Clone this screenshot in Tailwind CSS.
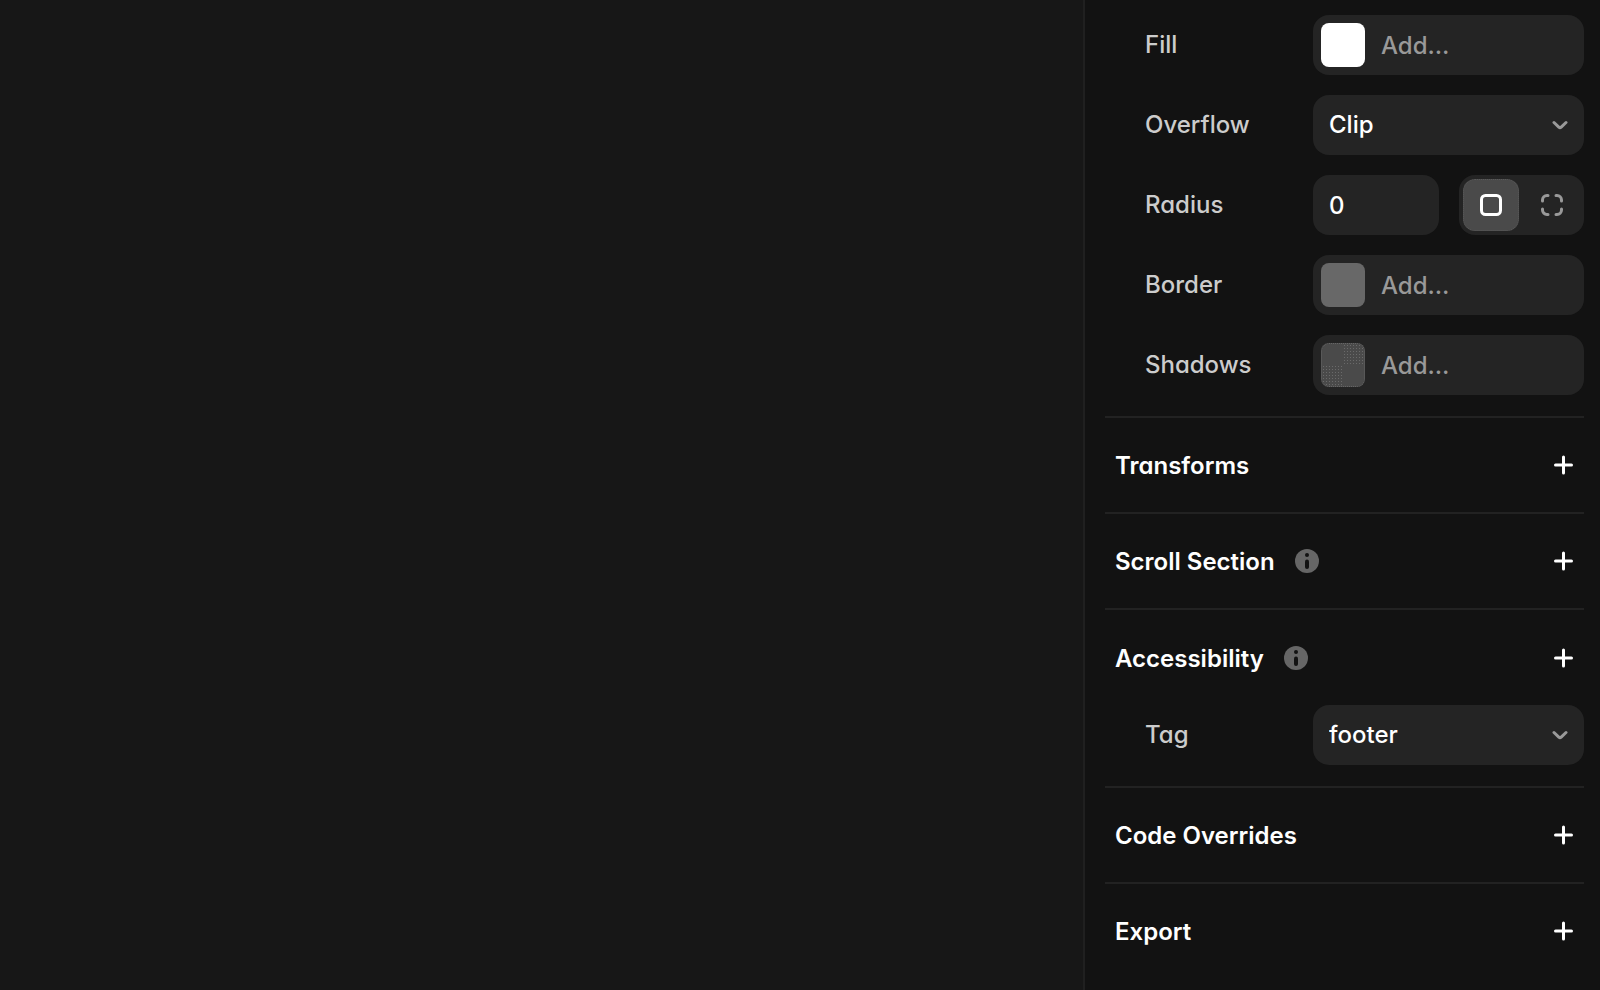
<!DOCTYPE html>
<html lang="en">
<head>
    <meta charset="UTF-8">
    <meta name="viewport" content="width=device-width, initial-scale=1.0">
    <title>Properties</title>
    <script src="https://cdn.jsdelivr.net/npm/@tailwindcss/browser@4"></script>
    <style>
        body {
            font-family: Inter, sans-serif;
            font-feature-settings: "cv11";
        }
    </style>
</head>
<body class="flex min-h-screen bg-[#171717] text-2xl font-medium text-white">
    <!-- Canvas -->
    <main class="flex-1"></main>

    <!-- Properties panel -->
    <aside class="w-[517px] shrink-0 border-l-2 border-[#202020] bg-[#121212] pl-5 pr-4">
        <!-- Styles -->
        <section class="flex flex-col gap-5 pt-[15px] pb-[21px]">
            <div class="flex items-center">
                <label for="fill" class="flex-1 pl-10 text-[#cccccc]">Fill</label>
                <div class="flex h-15 w-[271px] items-center gap-4 rounded-2xl bg-[#242424] px-2">
                    <span class="size-11 shrink-0 rounded-lg bg-white"></span>
                    <input id="fill" type="text" placeholder="Add…" class="w-full min-w-0 pt-0.5 outline-none placeholder:text-[#999999]">
                </div>
            </div>
            <div class="flex items-center">
                <label for="overflow" class="flex-1 pl-10 text-[#cccccc]">Overflow</label>
                <div class="relative w-[271px]">
                    <select id="overflow" class="h-15 w-full appearance-none rounded-2xl bg-[#242424] px-4">
                        <option>Clip</option>
                        <option>Visible</option>
                    </select>
                    <svg class="pointer-events-none absolute top-6 right-4" width="16" height="12" viewBox="0 0 16 12" fill="none" stroke="#999999" stroke-width="3" stroke-linecap="round" stroke-linejoin="round"><path d="M2 3.5l4.8 4.6q1.2 1 2.4 0L14 3.5"/></svg>
                </div>
            </div>
            <div class="flex items-center">
                <label for="radius" class="flex-1 pl-10 text-[#cccccc]">Radius</label>
                <div class="grid w-[271px] grid-cols-2 gap-5">
                    <input id="radius" type="text" value="0" class="h-15 w-full rounded-2xl bg-[#242424] px-4 outline-none">
                    <div class="grid h-15 grid-cols-2 gap-1 rounded-2xl bg-[#242424] p-1">
                        <button aria-label="All corners" class="flex items-center justify-center rounded-xl border border-dotted border-[#5a5a5a] bg-[#4a4a4a]">
                            <svg width="24" height="24" viewBox="0 0 24 24" fill="none" stroke="#ffffff" stroke-width="3"><rect x="2.5" y="2.5" width="19" height="19" rx="4"/></svg>
                        </button>
                        <button aria-label="Each corner" class="flex items-center justify-center rounded-xl">
                            <svg width="24" height="24" viewBox="0 0 24 24" fill="none" stroke="#999999" stroke-width="3" stroke-linecap="round"><path d="M2.5 8V7A4.5 4.5 0 0 1 7 2.500h1M16 2.500h1A4.500 4.500 0 0 1 21.500 7v1M21.500 16v1a4.500 4.500 0 0 1-4.500 4.500h-1M8 21.500H7A4.500 4.500 0 0 1 2.500 17v-1"/></svg>
                        </button>
                    </div>
                </div>
            </div>
            <div class="flex items-center">
                <label for="border" class="flex-1 pl-10 text-[#cccccc]">Border</label>
                <div class="flex h-15 w-[271px] items-center gap-4 rounded-2xl bg-[#242424] px-2">
                    <span class="size-11 shrink-0 rounded-lg bg-[#686868]"></span>
                    <input id="border" type="text" placeholder="Add…" class="w-full min-w-0 pt-0.5 outline-none placeholder:text-[#999999]">
                </div>
            </div>
            <div class="flex items-center">
                <label for="shadows" class="flex-1 pl-10 text-[#cccccc]">Shadows</label>
                <div class="flex h-15 w-[271px] items-center gap-4 rounded-2xl bg-[#242424] px-2">
                    <span class="grid size-11 shrink-0 grid-cols-2 overflow-hidden rounded-lg border border-dotted border-[#666666] bg-[#4a4a4a]">
                        <span></span>
                        <span class="bg-[radial-gradient(#6a6a6a_1px,transparent_1px)] bg-[size:3px_3px]"></span>
                        <span class="bg-[radial-gradient(#6a6a6a_1px,transparent_1px)] bg-[size:3px_3px]"></span>
                        <span></span>
                    </span>
                    <input id="shadows" type="text" placeholder="Add…" class="w-full min-w-0 pt-0.5 outline-none placeholder:text-[#999999]">
                </div>
            </div>
        </section>

        <!-- Transforms -->
        <section class="border-t-2 border-[#222222]">
            <div class="flex h-[94px] items-center justify-between px-[10px]">
                <h2 class="pt-0.5 font-semibold">Transforms</h2>
                <button aria-label="Add transform">
                    <svg width="20" height="20" viewBox="0 0 20 20" fill="none" stroke="#ffffff" stroke-width="3" stroke-linecap="round"><path d="M9.500 2v16M1.500 10h16"/></svg>
                </button>
            </div>
        </section>

        <!-- Scroll section -->
        <section class="border-t-2 border-[#222222]">
            <div class="flex h-[94px] items-center gap-5 px-[10px]">
                <h2 class="pt-0.5 font-semibold">Scroll Section</h2>
                <svg width="24" height="24" viewBox="0 0 24 24"><circle cx="12" cy="12" r="12" fill="#666666"/><circle cx="12" cy="6" r="2" fill="#121212"/><path d="M12 12.500v5.500" stroke="#121212" stroke-width="4" stroke-linecap="round"/></svg>
                <button aria-label="Add scroll section" class="ml-auto">
                    <svg width="20" height="20" viewBox="0 0 20 20" fill="none" stroke="#ffffff" stroke-width="3" stroke-linecap="round"><path d="M9.500 2v16M1.500 10h16"/></svg>
                </button>
            </div>
        </section>

        <!-- Accessibility -->
        <section class="border-t-2 border-[#222222] pb-[21px]">
            <div class="flex h-[95px] items-center gap-5 px-[10px]">
                <h2 class="pt-0.5 font-semibold">Accessibility</h2>
                <svg width="24" height="24" viewBox="0 0 24 24"><circle cx="12" cy="12" r="12" fill="#666666"/><circle cx="12" cy="6" r="2" fill="#121212"/><path d="M12 12.500v5.500" stroke="#121212" stroke-width="4" stroke-linecap="round"/></svg>
                <button aria-label="Add accessibility option" class="ml-auto">
                    <svg width="20" height="20" viewBox="0 0 20 20" fill="none" stroke="#ffffff" stroke-width="3" stroke-linecap="round"><path d="M9.500 2v16M1.500 10h16"/></svg>
                </button>
            </div>
            <div class="flex items-center">
                <label for="tag" class="flex-1 pl-10 text-[#cccccc]">Tag</label>
                <div class="relative w-[271px]">
                    <select id="tag" class="h-15 w-full appearance-none rounded-2xl bg-[#242424] px-4">
                        <option>footer</option>
                        <option>section</option>
                    </select>
                    <svg class="pointer-events-none absolute top-6 right-4" width="16" height="12" viewBox="0 0 16 12" fill="none" stroke="#999999" stroke-width="3" stroke-linecap="round" stroke-linejoin="round"><path d="M2 3.5l4.8 4.6q1.2 1 2.4 0L14 3.5"/></svg>
                </div>
            </div>
        </section>

        <!-- Code overrides -->
        <section class="border-t-2 border-[#222222]">
            <div class="flex h-[94px] items-center justify-between px-[10px]">
                <h2 class="pt-0.5 font-semibold">Code Overrides</h2>
                <button aria-label="Add code override">
                    <svg width="20" height="20" viewBox="0 0 20 20" fill="none" stroke="#ffffff" stroke-width="3" stroke-linecap="round"><path d="M9.500 2v16M1.500 10h16"/></svg>
                </button>
            </div>
        </section>

        <!-- Export -->
        <section class="border-t-2 border-[#222222]">
            <div class="flex h-[94px] items-center justify-between px-[10px]">
                <h2 class="pt-0.5 font-semibold">Export</h2>
                <button aria-label="Add export">
                    <svg width="20" height="20" viewBox="0 0 20 20" fill="none" stroke="#ffffff" stroke-width="3" stroke-linecap="round"><path d="M9.500 2v16M1.500 10h16"/></svg>
                </button>
            </div>
        </section>
    </aside>
</body>
</html>
